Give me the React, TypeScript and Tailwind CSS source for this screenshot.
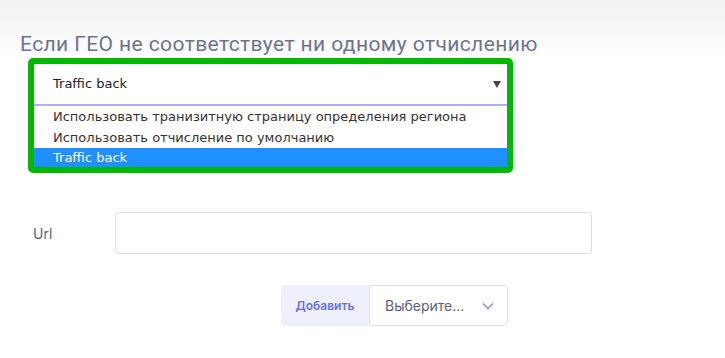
export default function App() {
  const options = [
    "Использовать транизитную страницу определения региона",
    "Использовать отчисление по умолчанию",
    "Traffic back",
  ];

  return (
    <div className="w-[725px] h-[358px] overflow-hidden bg-[linear-gradient(to_bottom,#f1f1f3,#ffffff_60px)] font-['Inter',sans-serif]">
      <h2 className="pt-[32px] pl-5 text-[21px] leading-6 tracking-[0.4px] text-[#6e7391] font-['Roboto',sans-serif] font-normal">
        Если ГЕО не соответствует ни одному отчислению
      </h2>

      <div className="mt-[2px] ml-[28px] w-[485px] h-[115px] border-[6px] border-[#02b802] rounded-[5px] bg-white flex flex-col font-['DejaVu_Sans',sans-serif] text-[13px] text-[#333]">
        <div className="h-[40px] flex items-center justify-between pl-[19px] pr-[6px]">
          <span className="text-[#222]">Traffic back</span>
          <span className="w-0 h-0 border-l-[4px] border-r-[4px] border-t-[7px] border-l-transparent border-r-transparent border-t-[#444]" />
        </div>
        <div className="h-[2px] bg-[#a9b4ee]" />
        {options.map((o, i) => (
          <div
            key={o}
            className={
              i === 2
                ? "h-[19px] flex items-center pl-[19px] bg-[#1e90ff] text-white"
                : "h-[21px] flex items-center pl-[19px] text-[#333]"
            }
          >
            {o}
          </div>
        ))}
      </div>

      <div className="mt-[39px] ml-[33px] flex items-center">
        <span className="w-[82px] text-[14px] text-[#5d6183]">Url</span>
        <div className="w-[477px] h-[42px] rounded-[4px] border border-[#dcdfea] bg-white" />
      </div>

      <div className="mt-[31px] ml-[281px] flex">
        <button className="w-[88px] h-[41px] rounded-l-[4px] bg-[#eef0fe] text-[12px] font-semibold text-[#6571e0]">
          Добавить
        </button>
        <div className="w-[139px] h-[41px] rounded-r-[4px] border border-[#dfe1ea] bg-white flex items-center justify-between pl-[15px] pr-[13px]">
          <span className="text-[14px] text-[#5d6183]">Выберите...</span>
          <svg width="12" height="8" viewBox="0 0 12 8" fill="none">
            <path d="M1 1.5l5 5 5-5" stroke="#8a8fa8" strokeWidth="1.3" />
          </svg>
        </div>
      </div>
    </div>
  );
}
